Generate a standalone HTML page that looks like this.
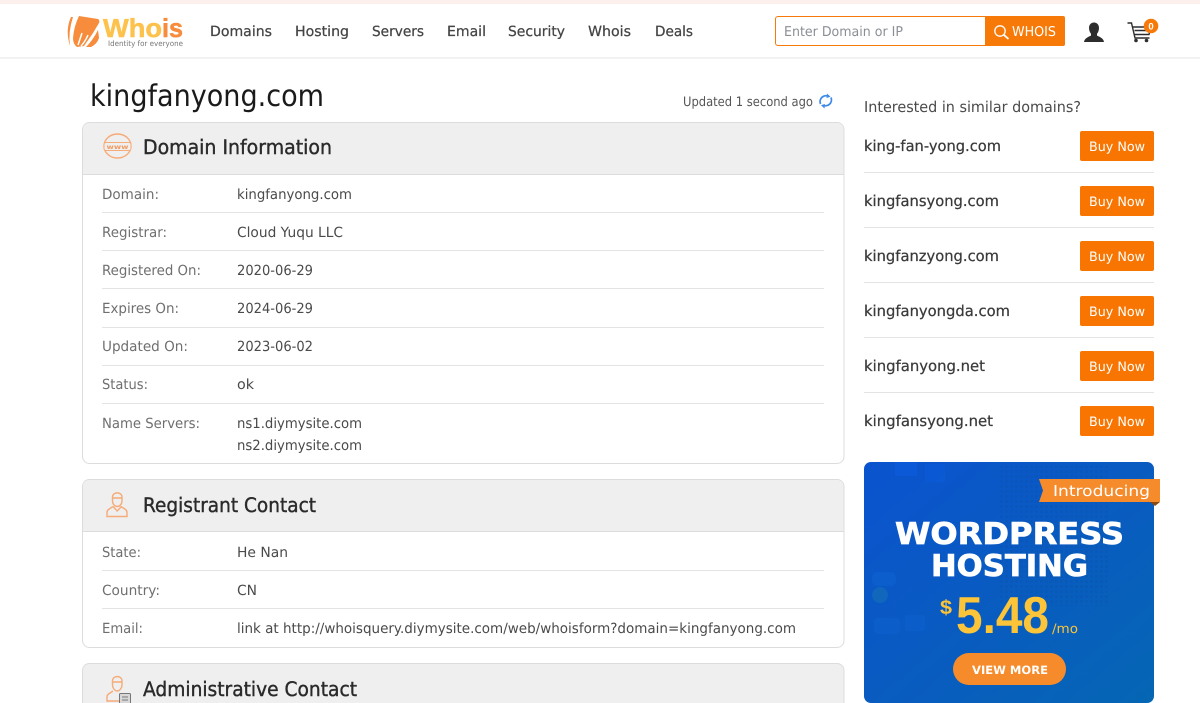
<!DOCTYPE html>
<html lang="en"><head><meta charset="utf-8"><title>kingfanyong.com</title>
<style>
html,body{margin:0;padding:0;background:#fff;width:1200px;height:703px;overflow:hidden}
svg{display:block}
text{font-family:"DejaVu Sans","Liberation Sans",sans-serif;text-rendering:geometricPrecision}
.b{font-family:"Liberation Sans",sans-serif;font-weight:700}
.m{font-family:"DejaVu Sans",sans-serif;font-weight:700}
.l{fill:#6f6f6f;font-size:14px}
.v{fill:#4a4a4a;font-size:14px}
.n{fill:#444;font-size:14px;stroke:#444;stroke-width:.25}
.h{fill:#2a2a2a;font-size:20px;stroke:#2a2a2a;stroke-width:.4}
.d{fill:#3a3a3a;font-size:15px;stroke:#3a3a3a;stroke-width:.25}
.y{fill:#fff;font-size:13px}
.s{stroke:#e4e4e4;stroke-width:1;shape-rendering:crispEdges}
.i{fill:none;stroke:#f6ab78;stroke-width:1.4}
</style></head><body>
<svg width="1200" height="703" viewBox="0 0 1200 703" xmlns="http://www.w3.org/2000/svg">
<defs>
<linearGradient id="bg" x1="0" y1="0" x2="1" y2="1"><stop offset="0" stop-color="#0a53cf"/><stop offset=".55" stop-color="#095cbf"/><stop offset="1" stop-color="#0566b4"/></linearGradient>
<pattern id="dots" width="5" height="5" patternUnits="userSpaceOnUse"><rect width="3" height="3" fill="#0a4aa0" opacity=".2"/></pattern>
<clipPath id="bc"><rect x="864" y="462" width="290" height="241" rx="7"/></clipPath>
</defs>
<rect width="1200" height="703" fill="#fff"/>
<!-- header -->
<rect width="1200" height="4" fill="#fdf0ec"/>
<rect y="57" width="1200" height="2" fill="#f2f2f2"/>
<!-- logo -->
<path d="M79 16 L98 19 Q100 20 99 23 L93 33 L84 46 L77 47 Q73 44 73 38 Q74 26 79 16Z" fill="#f68c3c"/>
<path d="M98 30 L99 38 Q97 44 91 47 L86 47 Q93 40 98 30Z" fill="#f68c3c"/>
<path d="M71 17 Q65 30 70 46 Q68 32 73 17Z" fill="#f68c3c"/>
<path d="M82 33 L78 45 M88 35 Q85 42 81 46" fill="none" stroke="#fff" stroke-width="1.500"/>
<text class="b" x="103" y="37" font-size="26" textLength="59" lengthAdjust="spacingAndGlyphs" fill="#fdc24c" stroke="#fdc24c" stroke-width=".5">Who</text>
<text class="b" x="162" y="37" font-size="26" textLength="21" lengthAdjust="spacingAndGlyphs" fill="#f68c3c" stroke="#f68c3c" stroke-width=".5">is</text>
<text x="108" y="46" font-size="7.500" fill="#777" textLength="75" lengthAdjust="spacingAndGlyphs">Identity for everyone</text>
<!-- nav -->
<text class="n" x="210" y="36" textLength="62" lengthAdjust="spacingAndGlyphs">Domains</text>
<text class="n" x="295" y="36" textLength="54" lengthAdjust="spacingAndGlyphs">Hosting</text>
<text class="n" x="372" y="36" textLength="52" lengthAdjust="spacingAndGlyphs">Servers</text>
<text class="n" x="447" y="36" textLength="39" lengthAdjust="spacingAndGlyphs">Email</text>
<text class="n" x="508" y="36" textLength="57" lengthAdjust="spacingAndGlyphs">Security</text>
<text class="n" x="588" y="36" textLength="43" lengthAdjust="spacingAndGlyphs">Whois</text>
<text class="n" x="655" y="36" textLength="38" lengthAdjust="spacingAndGlyphs">Deals</text>
<!-- search -->
<rect x="775.500" y="16.500" width="289" height="29" rx="2.500" fill="#fff" stroke="#f77a08"/>
<path d="M985 16h78a2 2 0 0 1 2 2v26a2 2 0 0 1-2 2h-78z" fill="#f77a08"/>
<text x="784" y="36" font-size="13.500" fill="#8a8f95" textLength="119" lengthAdjust="spacingAndGlyphs">Enter Domain or IP</text>
<circle cx="1000" cy="31" r="5.200" fill="none" stroke="#fff" stroke-width="1.300"/>
<path d="M1003.800 34.800L1008.500 39" stroke="#fff" stroke-width="1.800" fill="none"/>
<text x="1012" y="36" font-size="13.500" fill="#fff" textLength="44" lengthAdjust="spacingAndGlyphs">WHOIS</text>
<!-- user -->
<path d="M1094 22.500c3.300 0 5 2.500 5 5.500 0 2.500-1 4.500-2 5.800v1.700c1 1 6.500 2 7 6.500h-20c.5-4.500 6-5.500 7-6.500v-1.700c-1-1.300-2-3.300-2-5.800 0-3 1.700-5.500 5-5.500z" fill="#2d2d2d"/>
<!-- cart -->
<path d="M1127.500 23h4l3.500 15h14.500M1133 27h18l-2 7.500h-15M1134.500 30.500h15" fill="none" stroke="#2d2d2d" stroke-width="1.400"/>
<circle cx="1136" cy="40.500" r="1.800" fill="#2d2d2d"/><circle cx="1146.500" cy="40.500" r="1.800" fill="#2d2d2d"/>
<circle cx="1151" cy="26" r="7.300" fill="#f77a08"/>
<text x="1151" y="29.500" font-size="9.500" fill="#fff" text-anchor="middle" class="b">0</text>
<!-- title -->
<text x="90" y="106" font-size="30" fill="#1a1a1a" textLength="234" lengthAdjust="spacingAndGlyphs">kingfanyong.com</text>
<text x="683" y="106" font-size="13" fill="#555" textLength="130" lengthAdjust="spacingAndGlyphs">Updated 1 second ago</text>
<path d="M820.500 104a6 6 0 0 1 8.500-7.500M831 97.500a6 6 0 0 1-8.500 7.500" fill="none" stroke="#3f8bea" stroke-width="1.800"/>
<path d="M827 93.500l3.500 3.300-4 1.200zM824.500 108.500l-3.500-3.300 4-1.200z" fill="#3f8bea"/>
<!-- panel 1 -->
<rect x="82.500" y="122.500" width="761.500" height="341" rx="7" fill="#fff" stroke="#dcdcdc"/>
<path d="M83 174.500V130a7 7 0 0 1 7-7H836.500a7 7 0 0 1 7 7V174.500z" fill="#efefef"/>
<path d="M83 174.500H844" stroke="#dcdcdc" shape-rendering="crispEdges"/>
<ellipse cx="117.500" cy="146" rx="13.500" ry="12" class="i"/>
<rect x="104" y="142.500" width="27" height="8" rx="2" fill="#efefef" stroke="#f6ab78"/>
<text class="m" x="106.500" y="149" font-size="6.500" fill="#f29a60" textLength="22" lengthAdjust="spacingAndGlyphs">www</text>
<text class="h" x="143" y="154" textLength="189" lengthAdjust="spacingAndGlyphs">Domain Information</text>
<path class="s" d="M102 212.500H824M102 250.500H824M102 288.500H824M102 327.500H824M102 365.500H824M102 403.500H824"/>
<text class="l" x="102" y="199" textLength="57" lengthAdjust="spacingAndGlyphs">Domain:</text>
<text class="v" x="237" y="199" textLength="115" lengthAdjust="spacingAndGlyphs">kingfanyong.com</text>
<text class="l" x="102" y="237" textLength="65" lengthAdjust="spacingAndGlyphs">Registrar:</text>
<text class="v" x="237" y="237" textLength="106" lengthAdjust="spacingAndGlyphs">Cloud Yuqu LLC</text>
<text class="l" x="102" y="275" textLength="99" lengthAdjust="spacingAndGlyphs">Registered On:</text>
<text class="v" x="237" y="275" textLength="76" lengthAdjust="spacingAndGlyphs">2020-06-29</text>
<text class="l" x="102" y="313" textLength="77" lengthAdjust="spacingAndGlyphs">Expires On:</text>
<text class="v" x="237" y="313" textLength="76" lengthAdjust="spacingAndGlyphs">2024-06-29</text>
<text class="l" x="102" y="351" textLength="86" lengthAdjust="spacingAndGlyphs">Updated On:</text>
<text class="v" x="237" y="351" textLength="76" lengthAdjust="spacingAndGlyphs">2023-06-02</text>
<text class="l" x="102" y="389" textLength="46" lengthAdjust="spacingAndGlyphs">Status:</text>
<text class="v" x="237" y="389" textLength="17" lengthAdjust="spacingAndGlyphs">ok</text>
<text class="l" x="102" y="428" textLength="98" lengthAdjust="spacingAndGlyphs">Name Servers:</text>
<text class="v" x="237" y="428" textLength="125" lengthAdjust="spacingAndGlyphs">ns1.diymysite.com</text>
<text class="v" x="237" y="450" textLength="125" lengthAdjust="spacingAndGlyphs">ns2.diymysite.com</text>
<!-- panel 2 -->
<rect x="82.500" y="479.500" width="761.500" height="168" rx="7" fill="#fff" stroke="#dcdcdc"/>
<path d="M83 531.500V487a7 7 0 0 1 7-7H836.500a7 7 0 0 1 7 7V531.500z" fill="#efefef"/>
<path d="M83 531.500H844" stroke="#dcdcdc" shape-rendering="crispEdges"/>
<path class="i" d="M112.500 497c0-5.500 9.500-5.500 9.500 0v4c0 3-2.300 5.500-4.750 5.500s-4.750-2.500-4.750-5.500zM112 498h10.500M113 506.500l-4.500 3c-1 .7-1.500 1.500-1.500 3v4h20v-4c0-1.500-.5-2.300-1.500-3l-4.500-3M113 506.500l4.250 4.500 4.250-4.500"/>
<text class="h" x="143" y="512" textLength="173" lengthAdjust="spacingAndGlyphs">Registrant Contact</text>
<path class="s" d="M102 570.500H824M102 608.500H824"/>
<text class="l" x="102" y="557" textLength="39" lengthAdjust="spacingAndGlyphs">State:</text>
<text class="v" x="237" y="557" textLength="51" lengthAdjust="spacingAndGlyphs">He Nan</text>
<text class="l" x="102" y="595" textLength="58" lengthAdjust="spacingAndGlyphs">Country:</text>
<text class="v" x="237" y="595" textLength="20" lengthAdjust="spacingAndGlyphs">CN</text>
<text class="l" x="102" y="633" textLength="41" lengthAdjust="spacingAndGlyphs">Email:</text>
<text class="v" x="237" y="633" textLength="559" lengthAdjust="spacingAndGlyphs">link at http://whoisquery.diymysite.com/web/whoisform?domain=kingfanyong.com</text>
<!-- panel 3 -->
<rect x="82.500" y="663.500" width="761.500" height="60" rx="7" fill="#efefef" stroke="#dcdcdc"/>
<path class="i" d="M112.500 681c0-6 9.500-6 9.500 0v4c0 3-2.300 6-4.750 6s-4.750-3-4.750-6zM112 682h10.500M113 691l-4.500 3c-1 .7-1.500 1.500-1.500 3v4h12"/>
<rect x="119.500" y="693.500" width="11" height="13" rx="1" fill="#d8d8d8" stroke="#777"/>
<path d="M122 697h6M122 700h6" stroke="#777"/>
<text class="h" x="143" y="696" textLength="214" lengthAdjust="spacingAndGlyphs">Administrative Contact</text>
<!-- sidebar -->
<text x="864" y="112" font-size="15" fill="#4a4a4a" textLength="217" lengthAdjust="spacingAndGlyphs">Interested in similar domains?</text>
<path class="s" d="M864 172.500H1154M864 227.500H1154M864 282.500H1154M864 337.500H1154M864 392.500H1154"/>
<text class="d" x="864" y="151" textLength="137" lengthAdjust="spacingAndGlyphs">king-fan-yong.com</text>
<text class="d" x="864" y="206" textLength="135" lengthAdjust="spacingAndGlyphs">kingfansyong.com</text>
<text class="d" x="864" y="261" textLength="135" lengthAdjust="spacingAndGlyphs">kingfanzyong.com</text>
<text class="d" x="864" y="316" textLength="146" lengthAdjust="spacingAndGlyphs">kingfanyongda.com</text>
<text class="d" x="864" y="371" textLength="121" lengthAdjust="spacingAndGlyphs">kingfanyong.net</text>
<text class="d" x="864" y="426" textLength="129" lengthAdjust="spacingAndGlyphs">kingfansyong.net</text>
<g fill="#f77500">
<rect x="1080" y="131" width="74" height="30" rx="2"/><rect x="1080" y="186" width="74" height="30" rx="2"/><rect x="1080" y="241" width="74" height="30" rx="2"/><rect x="1080" y="296" width="74" height="30" rx="2"/><rect x="1080" y="351" width="74" height="30" rx="2"/><rect x="1080" y="406" width="74" height="30" rx="2"/>
</g>
<text class="y" x="1089" y="151" textLength="56" lengthAdjust="spacingAndGlyphs">Buy Now</text>
<text class="y" x="1089" y="206" textLength="56" lengthAdjust="spacingAndGlyphs">Buy Now</text>
<text class="y" x="1089" y="261" textLength="56" lengthAdjust="spacingAndGlyphs">Buy Now</text>
<text class="y" x="1089" y="316" textLength="56" lengthAdjust="spacingAndGlyphs">Buy Now</text>
<text class="y" x="1089" y="371" textLength="56" lengthAdjust="spacingAndGlyphs">Buy Now</text>
<text class="y" x="1089" y="426" textLength="56" lengthAdjust="spacingAndGlyphs">Buy Now</text>
<!-- banner -->
<g clip-path="url(#bc)">
<rect x="864" y="462" width="290" height="241" fill="url(#bg)"/>
<rect x="1000" y="466" width="110" height="140" fill="url(#dots)"/>
<rect x="895" y="462" width="22" height="14" fill="#0f5fe6" opacity=".45"/>
<rect x="925" y="464" width="20" height="18" fill="#0f5fe6" opacity=".35"/>
<circle cx="880" cy="595" r="8" fill="#1a7ab0" opacity=".45"/>
<rect x="872" y="572" width="24" height="14" rx="5" fill="#1268d8" opacity=".4"/>
<rect x="874" y="618" width="26" height="16" rx="4" fill="#1268d8" opacity=".35"/>
<rect x="905" y="615" width="20" height="16" rx="3" fill="#1268d8" opacity=".35"/>
</g>
<path d="M1150 502h10l-5 4z" fill="#8a4a12"/>
<path d="M1039 479H1160V502H1039L1043 490.500Z" fill="#f68b2c"/>
<text x="1053" y="496" font-size="15" fill="#fff" textLength="97" lengthAdjust="spacingAndGlyphs">Introducing</text>
<text class="m" x="895" y="544" font-size="30" fill="#fff" stroke="#fff" stroke-width=".7" textLength="229" lengthAdjust="spacingAndGlyphs">WORDPRESS</text>
<text class="m" x="931" y="576" font-size="30" fill="#fff" stroke="#fff" stroke-width=".7" textLength="157" lengthAdjust="spacingAndGlyphs">HOSTING</text>
<text class="b" x="940" y="614" font-size="20" fill="#fcc438" textLength="12" lengthAdjust="spacingAndGlyphs">$</text>
<text class="b" x="956" y="633" font-size="52" fill="#fcc438" textLength="93" lengthAdjust="spacingAndGlyphs">5.48</text>
<text x="1052" y="633" font-size="13" fill="#fcc438" textLength="26" lengthAdjust="spacingAndGlyphs">/mo</text>
<rect x="953" y="653" width="113" height="32" rx="16" fill="#f68b2c"/>
<text class="m" x="972" y="674" font-size="11.500" fill="#fff" textLength="76" lengthAdjust="spacingAndGlyphs">VIEW MORE</text>
</svg>
</body></html>
